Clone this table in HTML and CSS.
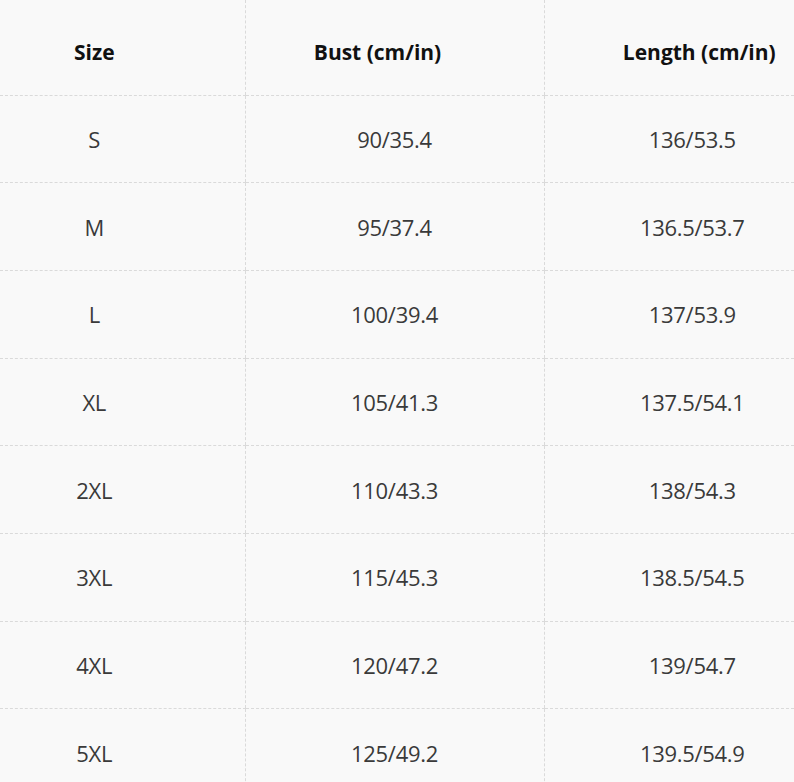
FILE: index.html
```html
<!DOCTYPE html>
<html>
<head>
<meta charset="utf-8">
<link rel="stylesheet" href="styles.css">
</head>
<body>
<table class="chart">
  <colgroup>
    <col class="c1"><col class="c2"><col class="c3">
  </colgroup>
  <thead>
    <tr class="head">
      <th class="size">Size</th>
      <th class="bust">Bust (cm/in)</th>
      <th class="len">Length (cm/in)</th>
    </tr>
  </thead>
  <tbody>
    <tr><td class="size">S</td><td class="bust">90/35.4</td><td class="len">136/53.5</td></tr>
    <tr><td class="size">M</td><td class="bust">95/37.4</td><td class="len">136.5/53.7</td></tr>
    <tr><td class="size">L</td><td class="bust">100/39.4</td><td class="len">137/53.9</td></tr>
    <tr><td class="size">XL</td><td class="bust">105/41.3</td><td class="len">137.5/54.1</td></tr>
    <tr><td class="size">2XL</td><td class="bust">110/43.3</td><td class="len">138/54.3</td></tr>
    <tr><td class="size">3XL</td><td class="bust">115/45.3</td><td class="len">138.5/54.5</td></tr>
    <tr><td class="size">4XL</td><td class="bust">120/47.2</td><td class="len">139/54.7</td></tr>
    <tr><td class="size">5XL</td><td class="bust">125/49.2</td><td class="len">139.5/54.9</td></tr>
  </tbody>
</table>
</body>
</html>
```
FILE: styles.css
```css
html, body {
  margin: 0;
  padding: 0;
  background: #f9f9f9;
  overflow: hidden;
}
.chart {
  width: 794px;
  border-collapse: collapse;
  table-layout: fixed;
  font-family: "Open Sans", "Noto Sans", sans-serif;
}
.c1 { width: 245px; }
.c2 { width: 299px; }
.c3 { width: 250px; }
th, td {
  text-align: center;
  padding: 0;
  border-bottom: 1px dashed #dadada;
  border-left: 1px dashed #dadada;
}
th:first-child, td:first-child { border-left: none; }
.head { height: 95px; }
tbody tr { height: 87.7px; }
th {
  font-weight: 700;
  font-size: 21px;
  color: #111;
  padding-top: 10px;
}
td {
  font-weight: 400;
  font-size: 22px;
  color: #3a3a3a;
  letter-spacing: -0.3px;
}
th.size, td.size { padding-right: 56px; }
th.bust { padding-right: 34px; }
td.bust { padding-right: 0; }
th.len { padding-left: 60px; }
td.len { padding-left: 46px; }
```
